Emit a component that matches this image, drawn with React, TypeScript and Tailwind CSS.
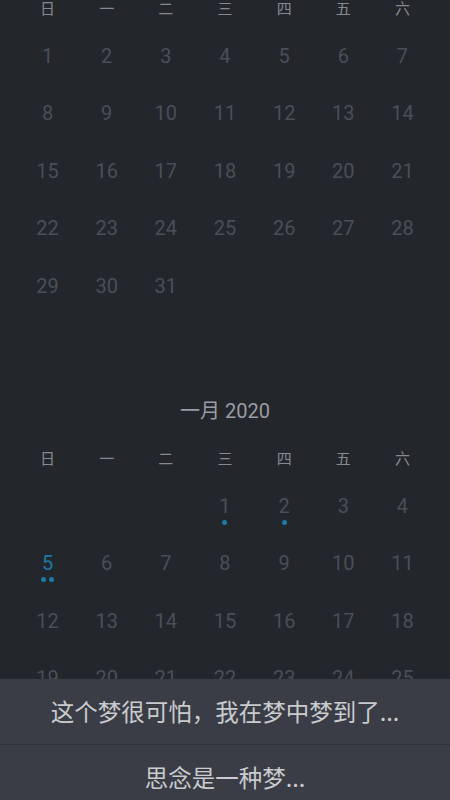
import React from 'react';

const weekdays = ['日', '一', '二', '三', '四', '五', '六'];

interface Month {
  title: string;
  offset: number; // weekday of day 1
  days: number;
  marks?: Record<number, number>; // day -> number of dots
  today?: number;
}

const months: Month[] = [
  { title: '十二月 2019', offset: 0, days: 31 },
  { title: '一月 2020', offset: 3, days: 31, marks: { 1: 1, 2: 1, 5: 2 }, today: 5 },
];

const dreams = ['这个梦很可怕，我在梦中梦到了...', '思念是一种梦...'];

function MonthBlock({ month }: { month: Month }) {
  const cells: (number | null)[] = [];
  for (let i = 0; i < month.offset; i++) cells.push(null);
  for (let d = 1; d <= month.days; d++) cells.push(d);
  while (cells.length < 42) cells.push(null);

  return (
    <div className="pb-[9px]">
      <div className="h-[60px] flex items-center justify-center text-[20px] text-[#9a9da3]">
        {month.title}
      </div>
      <div className="grid grid-cols-7 px-[18px] h-[36px] items-center">
        {weekdays.map(w => (
          <div key={w} className="text-center text-[15px] text-[#868a90]">
            {w}
          </div>
        ))}
      </div>
      <div className="grid grid-cols-7 px-[18px]">
        {cells.map((d, i) => {
          const dots = d && month.marks ? month.marks[d] || 0 : 0;
          const isToday = d !== null && d === month.today;
          return (
            <div key={i} className="relative h-[57.5px] flex items-center justify-center">
              {d !== null && (
                <span
                  className={`text-[20px] leading-none ${isToday ? 'text-[#1d7aa6]' : 'text-[#4a4f57]'}`}
                >
                  {d}
                </span>
              )}
              {dots > 0 && (
                <div className="absolute left-0 right-0 top-[calc(50%+14px)] flex justify-center gap-[3px]">
                  {Array.from({ length: dots }).map((_, k) => (
                    <span key={k} className="w-[5px] h-[5px] rounded-full bg-[#1d7aa6]" />
                  ))}
                </div>
              )}
            </div>
          );
        })}
      </div>
    </div>
  );
}

export default function App() {
  return (
    <div
      className="relative w-[450px] h-[800px] overflow-hidden bg-[#23262b]"
      style={{ fontFamily: 'Roboto, "Noto Sans CJK SC", sans-serif' }}
    >
      <div className="-mt-[69px]">
        {months.map(m => (
          <MonthBlock key={m.title} month={m} />
        ))}
      </div>

      {/* Bottom sheet */}
      <div className="absolute left-0 right-0 top-[679px] bottom-0 bg-[#3a3d45]">
        {dreams.map((t, i) => (
          <div
            key={t}
            className={`h-[66px] flex items-center justify-center text-[23.5px] text-[#c9cbce] ${i === 0 ? 'border-b border-[#30333a]' : ''}`}
            style={{ fontFamily: '"Noto Sans CJK SC", sans-serif' }}
          >
            {t}
          </div>
        ))}
      </div>
    </div>
  );
}
